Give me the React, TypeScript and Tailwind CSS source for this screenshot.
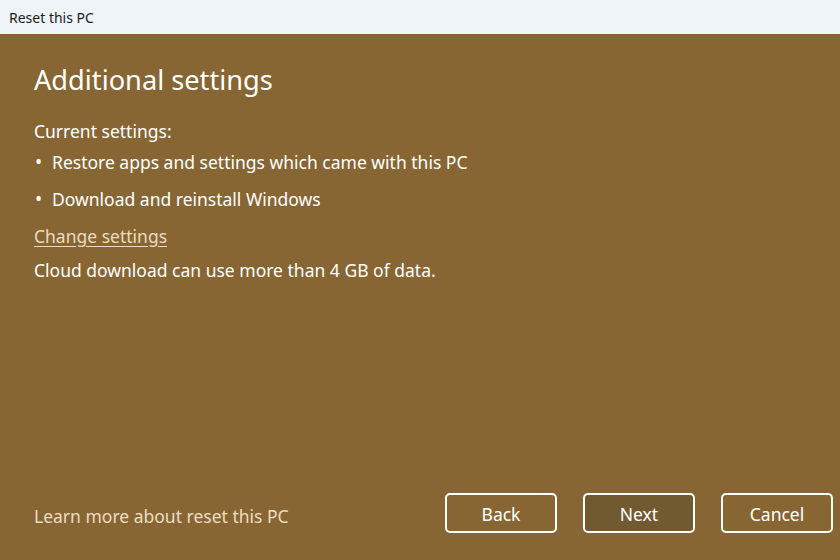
import React from "react";

export default function App() {
  const font = { fontFamily: '"Noto Sans", "Open Sans", sans-serif' };
  return (
    <div className="w-[840px] h-[560px] flex flex-col overflow-hidden bg-[#876633]" style={font}>
      <div className="h-[34px] shrink-0 bg-[#eff4f8] flex items-center pl-[9px] text-[14px] text-[#1a1a1a]">
        Reset this PC
      </div>
      <div className="flex-1 flex flex-col px-[34px] text-white">
        <h1 className="mt-[29px] text-[27.2px] leading-[34px] font-normal">Additional settings</h1>
        <div className="mt-[22px] text-[17.5px] leading-[24px]">Current settings:</div>
        <ul className="mt-[7px] flex flex-col gap-[13px] text-[17.5px] leading-[24px]">
          <li className="flex items-center">
            <span className="w-[18px] pl-[1px] text-[19px] leading-[24px]">•</span>
            <span>Restore apps and settings which came with this PC</span>
          </li>
          <li className="flex items-center">
            <span className="w-[18px] pl-[1px] text-[19px] leading-[24px]">•</span>
            <span>Download and reinstall Windows</span>
          </li>
        </ul>
        <a className="mt-[13px] text-[17.5px] leading-[24px] text-[#eadbc1] underline underline-offset-[3px] self-start">
          Change settings
        </a>
        <div className="mt-[10px] text-[17.5px] leading-[24px]">Cloud download can use more than 4 GB of data.</div>
        <div className="mt-auto mb-[27px] flex items-center">
          <a className="text-[17.5px] text-[#ecdcc2] mt-[6px]">Learn more about reset this PC</a>
          <div className="ml-auto flex gap-[26px] mr-[-27px]">
            <button className="w-[112px] h-[40px] pt-[3px] rounded-[5px] border-2 border-white text-[17.5px] text-white">Back</button>
            <button className="w-[112px] h-[40px] pt-[3px] rounded-[5px] border-2 border-white bg-[#715a2f] text-[17.5px] text-white">Next</button>
            <button className="w-[112px] h-[40px] pt-[3px] rounded-[5px] border-2 border-white text-[17.5px] text-white">Cancel</button>
          </div>
        </div>
      </div>
    </div>
  );
}
